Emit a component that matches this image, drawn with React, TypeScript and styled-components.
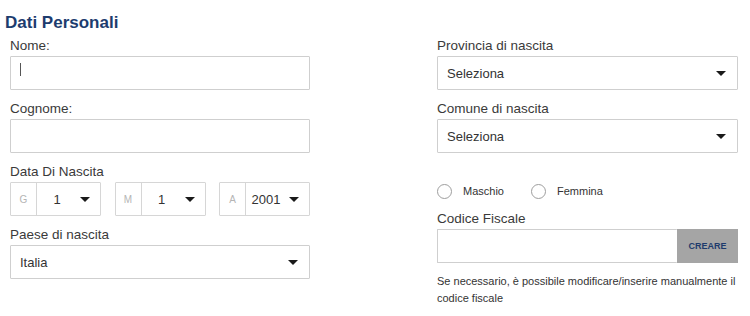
import React from "react";
import styled, { createGlobalStyle } from "styled-components";

const Global = createGlobalStyle`
  html, body { margin: 0; padding: 0; background: #fff; }
  body { font-family: "Liberation Sans", Arial, sans-serif; color: #333; }
  * { box-sizing: border-box; }
`;

const Page = styled.div`
  padding: 13px 0 0 5px;
  width: 750px;
`;

const Title = styled.h2`
  margin: 0 0 6px 0;
  font-size: 17px;
  line-height: 19px;
  font-weight: bold;
  color: #1d3c6e;
`;

const Columns = styled.div`
  display: grid;
  grid-template-columns: 300px 301px;
  column-gap: 127px;
  margin-left: 5px;
`;

const Column = styled.div`
  display: flex;
  flex-direction: column;
  gap: 11px;
`;

const Group = styled.div<{ $top?: number }>`
  display: flex;
  flex-direction: column;
  margin-top: ${(p) => p.$top ?? 0}px;
`;

const Label = styled.label`
  font-size: 13.5px;
  line-height: 16px;
  margin-bottom: 2px;
  color: #3a3a3a;
`;

const InputWrap = styled.div`
  position: relative;
`;

const TextInput = styled.input`
  display: block;
  width: 100%;
  height: 34px;
  border: 1px solid #cfcfcf;
  border-radius: 1px;
  padding: 0 10px;
  font-family: inherit;
  font-size: 13px;
  color: #333;
  outline: none;
  background: #fff;
`;

const Caret = styled.span`
  position: absolute;
  left: 10px;
  top: 7px;
  width: 1px;
  height: 13px;
  background: #555;
`;

const SelectWrap = styled.div`
  position: relative;
  flex: 1;
  display: flex;
`;

const Select = styled.select`
  appearance: none;
  -webkit-appearance: none;
  display: block;
  width: 100%;
  height: 34px;
  border: 1px solid #cfcfcf;
  border-radius: 1px;
  padding: 0 30px 0 9px;
  font-family: inherit;
  font-size: 13px;
  color: #333;
  background: #fff;
  outline: none;
`;

const Arrow = styled.span<{ $right: number }>`
  position: absolute;
  right: ${(p) => p.$right}px;
  top: 50%;
  margin-top: -2px;
  width: 0;
  height: 0;
  border-left: 5px solid transparent;
  border-right: 5px solid transparent;
  border-top: 5px solid #1a1a1a;
  pointer-events: none;
`;

const DateRow = styled.div`
  display: grid;
  grid-template-columns: 91px 91px 91px;
  justify-content: space-between;
`;

const DateBox = styled.div`
  display: flex;
  height: 34px;
  border: 1px solid #d6d6d6;
  border-radius: 1px;
`;

const Prefix = styled.span`
  width: 26px;
  flex: none;
  display: flex;
  align-items: center;
  justify-content: center;
  border-right: 1px solid #d6d6d6;
  font-size: 10px;
  color: #b5b5b5;
`;

const DateSelect = styled.select`
  appearance: none;
  -webkit-appearance: none;
  width: 100%;
  height: 32px;
  border: none;
  background: #fff;
  padding: 0 23px 0 0;
  font-family: inherit;
  font-size: 13px;
  color: #333;
  text-align: center;
  text-align-last: center;
  outline: none;
`;

const RadioRow = styled.div`
  display: flex;
  align-items: center;
  height: 16px;
  margin-top: 19px;
`;

const RadioOption = styled.label<{ $gap?: number }>`
  display: flex;
  align-items: center;
  margin-left: ${(p) => p.$gap ?? 0}px;
  font-size: 11px;
  color: #333;
`;

const Radio = styled.input`
  appearance: none;
  -webkit-appearance: none;
  width: 15px;
  height: 15px;
  margin: 0 11px 0 0;
  border: 1px solid #9e9e9e;
  border-radius: 50%;
  background: #fff;
`;

const CodeRow = styled.div`
  display: flex;
  height: 34px;
`;

const CodeInput = styled(TextInput)`
  flex: 1;
  border-right: none;
`;

const CreateButton = styled.button`
  width: 61px;
  flex: none;
  height: 34px;
  border: none;
  background: #a5a5a5;
  color: #1f3b6c;
  font-family: inherit;
  font-weight: bold;
  font-size: 9px;
  padding: 0;
  cursor: pointer;
`;

const Help = styled.p`
  margin: 10px 0 0 0;
  font-size: 11px;
  line-height: 17px;
  color: #333;
`;

const DateField = ({ prefix, value, options }: { prefix: string; value: string; options: string[] }) => (
  <DateBox>
    <Prefix>{prefix}</Prefix>
    <SelectWrap>
      <DateSelect defaultValue={value}>
        {options.map((o) => (
          <option key={o}>{o}</option>
        ))}
      </DateSelect>
      <Arrow $right={10} />
    </SelectWrap>
  </DateBox>
);

const SelectField = ({ value }: { value: string }) => (
  <SelectWrap>
    <Select defaultValue={value}>
      <option>{value}</option>
    </Select>
    <Arrow $right={12} />
  </SelectWrap>
);

export default function App() {
  return (
    <Page>
      <Global />
      <Title>Dati Personali</Title>
      <Columns>
        <Column>
          <Group>
            <Label>Nome:</Label>
            <InputWrap>
              <TextInput type="text" />
              <Caret />
            </InputWrap>
          </Group>
          <Group>
            <Label>Cognome:</Label>
            <TextInput type="text" />
          </Group>
          <Group>
            <Label>Data Di Nascita</Label>
            <DateRow>
              <DateField prefix="G" value="1" options={["1", "2", "3"]} />
              <DateField prefix="M" value="1" options={["1", "2", "3"]} />
              <DateField prefix="A" value="2001" options={["2000", "2001", "2002"]} />
            </DateRow>
          </Group>
          <Group>
            <Label>Paese di nascita</Label>
            <SelectField value="Italia" />
          </Group>
        </Column>
        <Column>
          <Group>
            <Label>Provincia di nascita</Label>
            <SelectField value="Seleziona" />
          </Group>
          <Group>
            <Label>Comune di nascita</Label>
            <SelectField value="Seleziona" />
          </Group>
          <RadioRow>
            <RadioOption>
              <Radio type="radio" name="sesso" />
              Maschio
            </RadioOption>
            <RadioOption $gap={27}>
              <Radio type="radio" name="sesso" />
              Femmina
            </RadioOption>
          </RadioRow>
          <Group $top={1}>
            <Label>Codice Fiscale</Label>
            <CodeRow>
              <CodeInput type="text" />
              <CreateButton type="button">CREARE</CreateButton>
            </CodeRow>
            <Help>Se necessario, è possibile modificare/inserire manualmente il codice fiscale</Help>
          </Group>
        </Column>
      </Columns>
    </Page>
  );
}
